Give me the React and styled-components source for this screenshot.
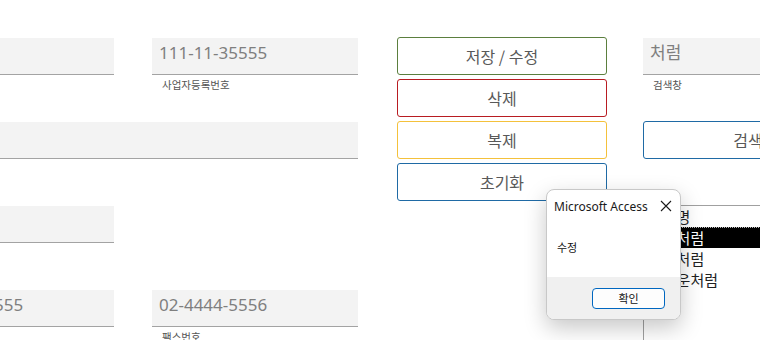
import React from 'react';
import styled, { createGlobalStyle } from 'styled-components';

const GlobalStyle = createGlobalStyle`
  html, body {
    margin: 0;
    padding: 0;
    background: #fff;
    width: 760px;
    height: 340px;
    overflow: hidden;
    font-family: 'Noto Sans', 'Noto Sans CJK KR', sans-serif;
  }
`;

const fields = [
  { left: { value: '처럼', label: '대표자명' }, right: { value: '111-11-35555', label: '사업자등록번호' } },
  { wide: { value: '', label: '주소' } },
  { left: { value: '', label: '담당자' } },
  { left: { value: '02-4444-5555', label: '전화번호' }, right: { value: '02-4444-5556', label: '팩스번호' } },
];

const buttons = [
  { text: '저장 / 수정', color: '#5b7f3e' },
  { text: '삭제', color: '#b81c22' },
  { text: '복제', color: '#f4c13b' },
  { text: '초기화', color: '#1f6aa5' },
];

const items = ['업체명', '하늘처럼', '바다처럼', '구름운처럼'];

export default function App() {
  return (
    <>
      <GlobalStyle />
      <Page>
        <FormGrid>
          {fields.map((row, i) =>
            row.wide ? (
              <Cell key={i} $span>
                <Field>{row.wide.value}</Field>
                <Label>{row.wide.label}</Label>
              </Cell>
            ) : (
              <React.Fragment key={i}>
                <Cell>
                  <Field>{row.left.value}</Field>
                  <Label>{row.left.label}</Label>
                </Cell>
                {row.right ? (
                  <Cell>
                    <Field>{row.right.value}</Field>
                    <Label>{row.right.label}</Label>
                  </Cell>
                ) : (
                  <Cell />
                )}
              </React.Fragment>
            )
          )}
        </FormGrid>

        <ButtonColumn>
          {buttons.map((b) => (
            <ActionButton key={b.text} $color={b.color}>{b.text}</ActionButton>
          ))}
        </ButtonColumn>

        <RightColumn>
          <Cell>
            <Field>처럼</Field>
            <Label>검색창</Label>
          </Cell>
          <ActionButton $color="#1f6aa5" $search>검색</ActionButton>
          <ListBox>
            {items.map((it, i) => (
              <ListItem key={it} $selected={i === 1}>{it}</ListItem>
            ))}
          </ListBox>
        </RightColumn>
      </Page>

      <Dialog>
        <DialogBody>
          <TitleBar>
            <Title>Microsoft Access</Title>
            <CloseIcon viewBox="0 0 12 12">
              <path d="M1 1 L11 11 M11 1 L1 11" stroke="#1a1a1a" strokeWidth="1.1" fill="none" />
            </CloseIcon>
          </TitleBar>
          <Message>수정</Message>
        </DialogBody>
        <Footer>
          <OkButton>확인</OkButton>
        </Footer>
      </Dialog>
    </>
  );
}

const Page = styled.div`
  display: flex;
  align-items: flex-start;
  margin-left: -92px;
  width: 1000px;
`;

const FormGrid = styled.div`
  display: grid;
  grid-template-columns: 206px 206px;
  grid-auto-rows: 84px;
  column-gap: 38px;
  padding-top: 38px;
`;

const Cell = styled.div`
  display: flex;
  flex-direction: column;
  grid-column: ${(p) => (p.$span ? '1 / span 2' : 'auto')};
  height: 84px;
`;

const Field = styled.div`
  box-sizing: border-box;
  height: 37px;
  background: #f3f3f3;
  border-bottom: 1px solid #a3a3a3;
  padding: 3px 7px 0;
  display: flex;
  align-items: flex-start;
  font-family: 'Noto Sans', 'Noto Sans CJK KR', sans-serif;
  font-size: 17px;
  line-height: 24px;
  color: #7f7f7f;
  white-space: nowrap;
  overflow: hidden;
`;

const Label = styled.div`
  margin-top: 3px;
  padding-left: 10px;
  font-family: 'Noto Sans CJK KR', sans-serif;
  font-size: 10.5px;
  line-height: 14px;
  color: #555;
  white-space: nowrap;
`;

const ButtonColumn = styled.div`
  display: flex;
  flex-direction: column;
  gap: 4px;
  margin-left: 39px;
  padding-top: 37px;
`;

const ActionButton = styled.div`
  box-sizing: border-box;
  width: 210px;
  height: 38px;
  border: 1px solid ${(p) => p.$color};
  border-radius: 3px;
  display: flex;
  align-items: center;
  justify-content: center;
  font-family: 'Noto Sans CJK KR', sans-serif;
  font-size: 16px;
  color: #595959;
  background: #fff;
  margin-top: ${(p) => (p.$search ? '-1px' : '0')};
`;

const RightColumn = styled.div`
  display: flex;
  flex-direction: column;
  margin-left: 36px;
  padding-top: 38px;
  width: 210px;
`;

const ListBox = styled.div`
  margin-top: 46px;
  height: 200px;
  border-top: 1px solid #a0a0a0;
  border-left: 1px solid #a0a0a0;
  display: flex;
  flex-direction: column;
`;

const ListItem = styled.div`
  box-sizing: border-box;
  height: 21px;
  line-height: 20px;
  padding-left: 5px;
  font-family: 'Noto Sans CJK KR', sans-serif;
  font-size: 15px;
  white-space: nowrap;
  color: ${(p) => (p.$selected ? '#fff' : '#222')};
  background: ${(p) => (p.$selected ? '#000' : 'transparent')};
  border-top: 1px dotted ${(p) => (p.$selected ? '#bbb' : 'transparent')};
`;

const Dialog = styled.div`
  position: absolute;
  left: 546px;
  top: 189px;
  width: 135px;
  height: 131px;
  box-sizing: border-box;
  border: 1px solid #c8c8c8;
  border-radius: 8px;
  background: #fff;
  box-shadow: 0 8px 22px rgba(0, 0, 0, 0.22);
  overflow: hidden;
  display: flex;
  flex-direction: column;
`;

const DialogBody = styled.div`
  flex: 1;
  display: flex;
  flex-direction: column;
`;

const TitleBar = styled.div`
  display: flex;
  align-items: center;
  justify-content: space-between;
  padding: 7px 8px 0 7px;
  height: 18px;
`;

const Title = styled.div`
  font-family: 'Noto Sans', sans-serif;
  font-size: 12px;
  color: #1a1a1a;
`;

const CloseIcon = styled.svg`
  width: 12px;
  height: 12px;
`;

const Message = styled.div`
  margin-top: 24px;
  padding-left: 10px;
  font-family: 'Noto Sans CJK KR', sans-serif;
  font-size: 11px;
  color: #111;
`;

const Footer = styled.div`
  height: 42px;
  background: #f0f0f0;
  display: flex;
  align-items: center;
  justify-content: flex-end;
  padding-right: 15px;
`;

const OkButton = styled.div`
  box-sizing: border-box;
  width: 73px;
  height: 21px;
  border: 1px solid #0067c0;
  border-radius: 4px;
  background: #fdfdfd;
  display: flex;
  align-items: center;
  justify-content: center;
  font-family: 'Noto Sans CJK KR', sans-serif;
  font-size: 11px;
  color: #111;
`;
